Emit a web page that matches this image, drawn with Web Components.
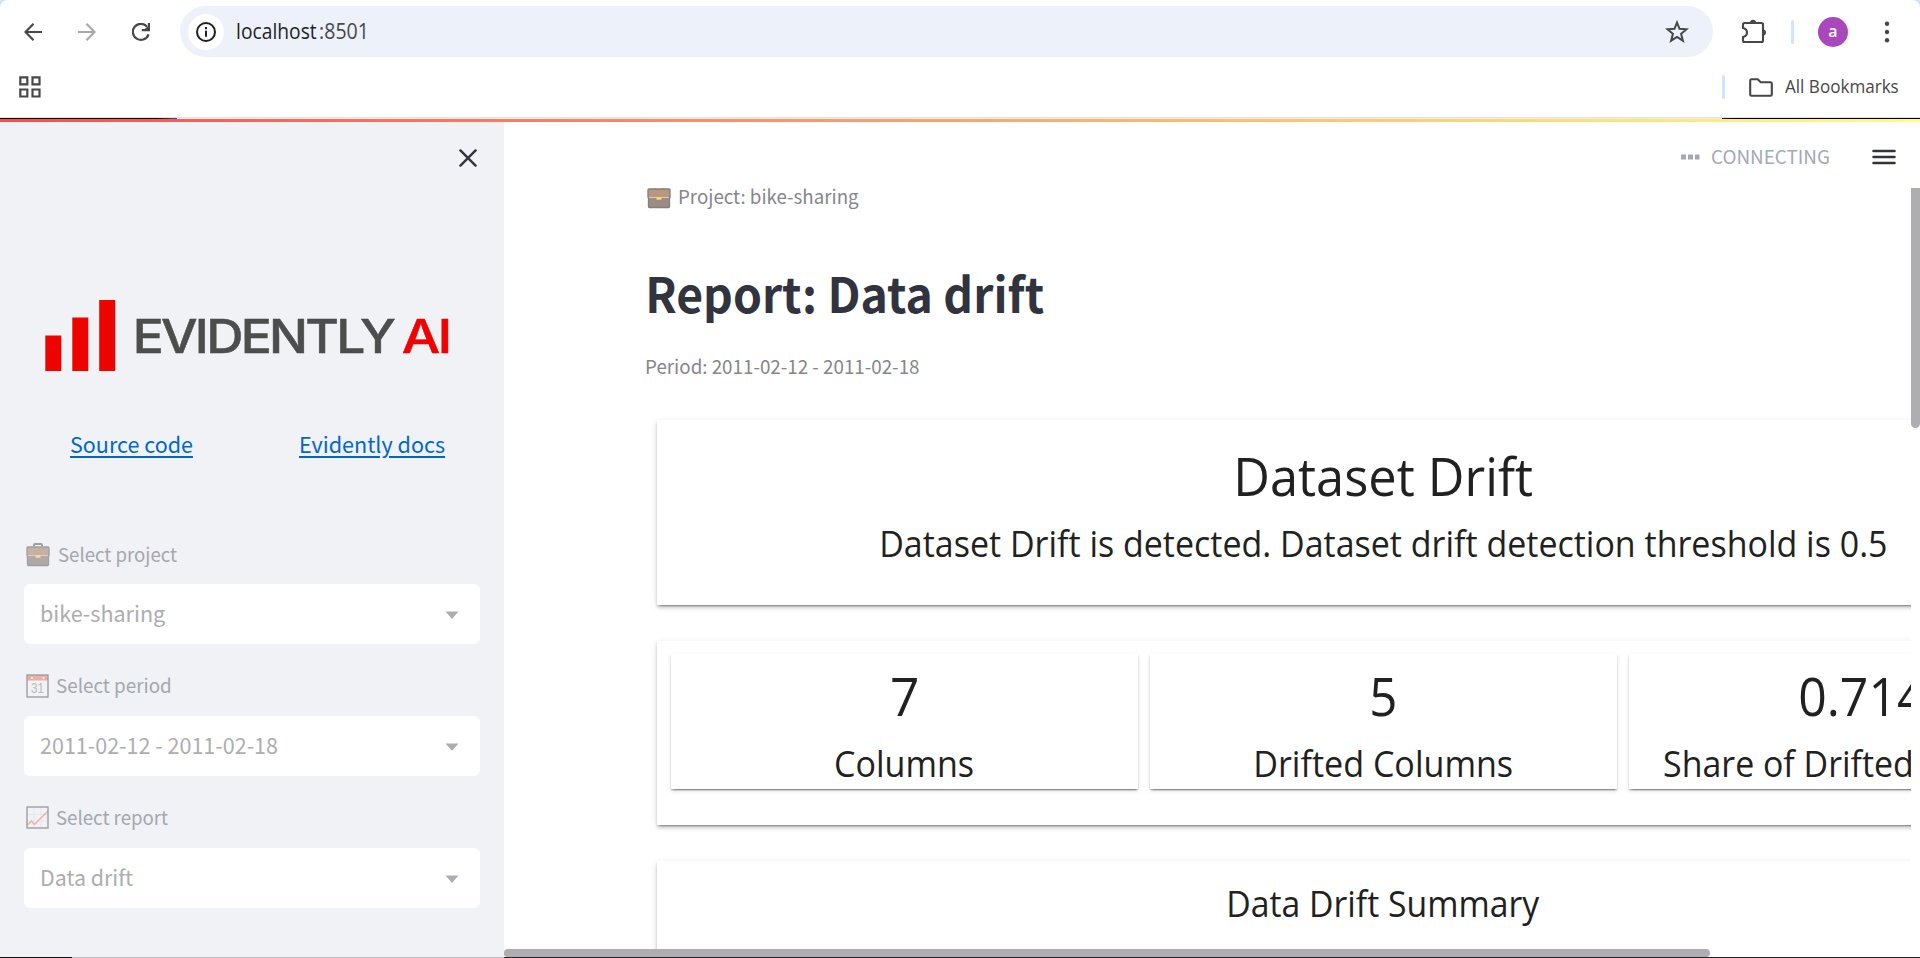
<!DOCTYPE html>
<html lang="en">
<head>
<meta charset="utf-8">
<title>Evidently AI</title>
<style>
html,body{margin:0;height:100%;overflow:hidden;background:#fff}
body{font-family:"Open Sans","Noto Sans",sans-serif;display:flex;flex-direction:column;width:1920px;height:958px}
</style>
</head>
<body>
<browser-bar></browser-bar>
<report-app></report-app>
<script>
const SRC = '"Noto Sans CJK SC","Noto Sans",sans-serif';
function define(name, html, setup) {
  customElements.define(name, class extends HTMLElement {
    constructor() {
      super();
      this.attachShadow({mode: 'open'}).innerHTML = html;
    }
    connectedCallback() { if (setup) setup.call(this, this.shadowRoot); }
  });
}
const pen = document.createElement('canvas').getContext('2d');

/* One line of text whose ink is set to a given width in pixels. */
define('fit-text', `<style>
  :host{display:block;white-space:nowrap;flex:none}
  span{display:inline-block;transform-origin:0 50%;white-space:nowrap}
  :host([link]) span{text-decoration:underline;text-decoration-thickness:2px;text-underline-offset:3px}
</style><span><slot></slot></span>`, function (root) {
  const cs = getComputedStyle(this);
  pen.font = cs.fontWeight + ' ' + cs.fontSize + ' ' + cs.fontFamily;
  pen.letterSpacing = cs.letterSpacing === 'normal' ? '0px' : cs.letterSpacing;
  const m = pen.measureText(this.textContent);
  const ink = m.actualBoundingBoxLeft + m.actualBoundingBoxRight;
  const w = +this.getAttribute('w');
  const s = w / ink;
  this.style.width = w + 'px';
  root.querySelector('span').style.transform = `translateX(${m.actualBoundingBoxLeft * s}px) scaleX(${s})`;
});

define('brief-case', `<style>:host{display:block;flex:none;width:24px;height:24px}svg{display:block}</style>
<svg width="24" height="24" viewBox="0 0 24 24">
<path d="M8 3.500V2q0-1 1-1h6q1 0 1 1v1.500" fill="none" stroke="#3b3b40" stroke-width="2"/>
<path d="M1.500 13h21v8.500q0 1-1 1h-19q-1 0-1-1z" fill="#694f47"/>
<path d="M1 5q0-1 1-1h20q1 0 1 1v7.500H1z" fill="#946137"/>
<path d="M2 4h20q1 0 1 1v7.500l-.5.500v8.500q0 1-1 1h-19q-1 0-1-1V13L1 12.500V5q0-1 1-1z" fill="none" stroke="#3b3b40" stroke-width="1.300"/>
<rect x="9.500" y="12.500" width="5" height="2.200" fill="#ffc524"/></svg>`);

define('calendar-icon', `<style>:host{display:block;flex:none;width:23px;height:24px}svg{display:block}</style>
<svg width="23" height="24" viewBox="0 0 23 24"><rect x="1" y="1" width="21" height="22" fill="#f2f2f2"/>
<rect x="1" y="1" width="21" height="5.500" fill="#f25c43"/><circle cx="6" cy="4" r="1" fill="#fff"/><circle cx="17.500" cy="4" r="1" fill="#fff"/>
<rect x="1" y="1" width="21" height="22" fill="none" stroke="#3b3b40" stroke-width="1.400"/>
<text x="11.500" y="19.300" text-anchor="middle" font-family="Liberation Sans,sans-serif" font-size="14" textLength="13" lengthAdjust="spacingAndGlyphs" fill="#77777b">31</text></svg>`);

define('chart-icon', `<style>:host{display:block;flex:none;width:23px;height:23px}svg{display:block}</style>
<svg width="23" height="23" viewBox="0 0 23 23"><rect x="1" y="1" width="21" height="21" fill="#f2f3f4"/>
<path d="M8 1v21M15 1v21M1 8.500h21M1 15h21" stroke="#dcdcde" stroke-width="1"/>
<path d="M1.500 19l4-4 3 3.500L22 5" fill="none" stroke="#f25c43" stroke-width="1.500"/>
<rect x="1" y="1" width="21" height="21" fill="none" stroke="#3b3b40" stroke-width="1.400"/></svg>`);

define('browser-bar', `<style>
:host{display:block;flex:none;height:122px;background:#d3e3fd;color:#474747}
.bar{background:#fff;border-radius:8px 8px 0 0;height:117px}
.nav{display:flex;align-items:center;padding:6px 0 0 24px;height:51px}
.nav svg{display:block;flex:none}
.pill{display:flex;align-items:center;box-sizing:border-box;width:1533px;height:51px;border-radius:26px;background:#ecf1fa;margin-left:30px;padding:0 24px 0 8px}
.info{width:36px;height:36px;border-radius:50%;background:#fff;display:grid;place-items:center;margin-right:13px}
.pill fit-text{font-size:21.500px;line-height:50px;margin-top:-1px}
.host{color:#1f1f1f;margin-right:3px}
.star{margin-left:auto}
.sep{width:3px;height:24px;border-radius:2px;background:#d3e3fd}
.avatar{width:30px;height:30px;border-radius:50%;background:#aa47bc;color:#fff;text-align:center;font:600 16px/29px "Open Sans",sans-serif}
.marks{display:flex;align-items:center;height:60px;padding:0 22px 0 19px}
.marks .sep{margin-left:auto}
.marks fit-text{font-size:18.500px;line-height:58px;margin:-2px 0 0 12px}
.edge{height:1px;background:#dfe1e5}
.under{height:1px;background:linear-gradient(90deg,#000 0 156px,#444 171px,#0b57d0 171px 177px,#e8f0f0 177px 1722px,#222 1722px,#000 1736px)}
.deco{height:3px;background:linear-gradient(90deg,#ff4b4b,#fffd80)}
</style>
<div class="bar">
<div class="nav">
<svg width="18" height="18" viewBox="0 0 18 18" fill="none" stroke="#474747" stroke-width="2.100"><path d="M9.500.8L1.500 9l8 8.200M1.500 9H18"/></svg>
<svg style="margin-left:36px" width="18" height="18" viewBox="0 0 18 18" fill="none" stroke="#a9a9a9" stroke-width="2.100"><path d="M8.500.8l8 8.200-8 8.200M16.500 9H0"/></svg>
<svg style="margin-left:36px" width="18" height="18" viewBox="0 0 18 18" fill="none" stroke="#474747" stroke-width="2.200"><path d="M16.500 11.300A8 8 0 1 1 15 3.700"/><path d="M17 0v7.200h-7.200"/><path d="M12 6.500l4.500-3.500v4z" fill="#474747" stroke="none"/></svg>
<div class="pill"><div class="info"><svg width="20" height="20" viewBox="0 0 20 20"><circle cx="10" cy="10" r="9" fill="none" stroke="#1f1f1f" stroke-width="2"/><path d="M10 8.800v6M10 5v2.200" stroke="#1f1f1f" stroke-width="2"/></svg></div>
<fit-text class="host" w="80">localhost</fit-text><fit-text w="45">:8501</fit-text>
<svg class="star" width="24" height="24" viewBox="0 0 24 24"><path d="M12 2.500l2.500 6.300 7 .5-5.400 4.500 1.800 6.900L12 17l-5.900 3.700 1.800-6.900L2.500 9.300l7-.5z" fill="none" stroke="#474747" stroke-width="2"/></svg></div>
<svg style="margin-left:28px" width="26" height="25" viewBox="0 0 26 25"><path d="M3.500 4h17q1.500 0 1.500 1.500v16q0 1.500-1.500 1.500h-17Q2 23 2 21.500V18q4-1 4-4.500T2 9V5.500Q2 4 3.500 4z" fill="none" stroke="#474747" stroke-width="2.100"/><path d="M9 4a3 3.200 0 0 1 6 0zM22 10.500a3 3 0 0 1 0 6z" fill="#474747"/></svg>
<div class="sep" style="margin-left:24px"></div>
<div class="avatar" style="margin-left:24px">a</div>
<svg style="margin-left:36px" width="6" height="22" viewBox="0 0 6 22" fill="#474747"><circle cx="3" cy="2.800" r="2.200"/><circle cx="3" cy="11" r="2.200"/><circle cx="3" cy="19.200" r="2.200"/></svg>
</div>
<div class="marks">
<svg width="22" height="22" viewBox="0 0 22 22" fill="none" stroke="#474747" stroke-width="2.200"><path d="M1.300 1.300h7v7h-7zM13.500 1.300h7v7h-7zM1.300 13.500h7v7h-7zM13.500 13.500h7v7h-7z"/></svg>
<div class="sep"></div>
<svg style="margin-left:24px" width="24" height="19" viewBox="0 0 24 19"><path d="M2.500 1.200h6.200l3 3h9.800q1.300 0 1.300 1.300v11q0 1.300-1.300 1.300h-19q-1.300 0-1.300-1.300v-14q0-1.300 1.300-1.300z" fill="none" stroke="#474747" stroke-width="2.100"/></svg>
<fit-text w="113">All Bookmarks</fit-text>
</div>
</div>
<div class="edge"></div><div class="under"></div><div class="deco"></div>`);

define('select-field', `<style>
:host{display:block;font-family:${SRC}}
.label{display:flex;height:30px;padding-left:2px;color:#a5a7af;margin-bottom:var(--gap,16px)}
.label fit-text{font-size:18.900px;line-height:30px;margin-left:var(--lead,6.500px)}
::slotted([slot=icon]){opacity:.45;margin-top:4px}
.box{display:flex;justify-content:space-between;align-items:center;box-sizing:border-box;height:60px;padding:0 21px 0 var(--pad,17px);background:#fff;border-radius:6px}
.box fit-text{font-size:21.600px;line-height:57px;color:#adadb1;align-self:flex-start}
svg{display:block;margin-top:1px}
</style><div class="label"><slot name="icon"></slot></div><div class="box"><svg width="14" height="8" viewBox="0 0 14 8"><path d="M.5.500h13L7.600 7.200q-.6.600-1.200 0z" fill="#adadb1"/></svg></div>`,
function (root) {
  const add = (box, text, w, first) => {
    const t = document.createElement('fit-text');
    t.textContent = text;
    t.setAttribute('w', w);
    first ? box.prepend(t) : box.append(t);
  };
  add(root.querySelector('.label'), this.getAttribute('label'), this.getAttribute('lw'));
  add(root.querySelector('.box'), this.getAttribute('value'), this.getAttribute('vw'), true);
});

define('side-bar', `<style>
:host{display:flex;flex-direction:column;box-sizing:border-box;width:504px;flex:none;background:#f0f2f6;font-family:${SRC}}
.close{display:flex;justify-content:flex-end;align-items:center;height:72px;padding-right:27px;flex:none}
.logo{display:flex;height:71px;margin-top:106px;padding-left:45px;flex:none;font:500 47px/40px Inter,sans-serif;letter-spacing:-2.500px}
.logo svg{margin-right:20px}
.logo fit-text{margin-top:16px;-webkit-text-stroke:.5px currentColor}
.links{display:flex;gap:107px;padding-left:71px;margin-top:53px;flex:none;font-size:21.600px;line-height:40px;color:#0068c9}
.fields{display:flex;flex-direction:column;gap:26px;padding:75px 24px 0;flex:1}
.foot{height:1px;background:linear-gradient(90deg,#111 72px,#bdbdbf 72px)}
</style>
<div class="close"><svg width="18" height="18" viewBox="0 0 18 18"><path d="M1.400 1.400l15.200 15.200M16.600 1.400L1.400 16.600" stroke="#31333f" stroke-width="2.400" stroke-linecap="round"/></svg></div>
<div class="logo"><svg width="71" height="71" viewBox="0 0 71 71" fill="#ed0400"><path d="M.3 35.500h16V71H.3zM27.300 17.500h16V71h-16zM54.200 0h16v71h-16z"/></svg>
<fit-text w="259" style="color:#4d4d4d">EVIDENTLY</fit-text><fit-text w="46" style="color:#ed0400;margin-left:8px">AI</fit-text></div>
<div class="links"><fit-text link w="122">Source code</fit-text><fit-text link w="144" style="margin-left:1px">Evidently docs</fit-text></div>
<div class="fields">
<select-field label="Select project" lw="119" value="bike-sharing" vw="124" style="--gap:15px;--lead:7.500px"><brief-case slot="icon"></brief-case></select-field>
<select-field label="Select period" lw="114" value="2011-02-12 - 2011-02-18" vw="237" style="--pad:16px"><calendar-icon slot="icon"></calendar-icon></select-field>
<select-field label="Select report" lw="112" value="Data drift" vw="91" style="--pad:18px"><chart-icon slot="icon"></chart-icon></select-field>
</div><div class="foot"></div>`);

define('paper-card', `<style>
:host{display:flex;flex-direction:column;align-items:center;box-sizing:border-box;background:#fff;color:#212121;
box-shadow:0 4.500px 1.500px -3px rgba(0,0,0,.2),0 3px 3px 0 rgba(0,0,0,.14),0 1.500px 7.500px 0 rgba(0,0,0,.12),0 1px 1px rgba(0,0,0,.1)}
::slotted([big]){font-size:53.500px;line-height:70px}
::slotted([mid]){font-size:36px;line-height:46px;margin-top:10px}
</style><slot></slot>`);

define('report-app', `<style>
:host{display:flex;flex:1;min-height:0}
main{flex:1;min-width:0;display:flex;flex-direction:column}
header{display:flex;justify-content:flex-end;align-items:center;box-sizing:border-box;height:66px;padding:2px 24px 0 0;flex:none;font:18.900px/64px ${SRC};color:#a3a8b8}
.view{flex:1;min-height:0;display:flex}
.page{flex:1;min-width:0;overflow:hidden;box-sizing:border-box;padding-left:142px;font-family:${SRC};color:#85868c}
.crumb{display:flex;margin:-7px 0 0 1px;height:30px;font-size:18.900px;line-height:30px}
.crumb brief-case{opacity:.65;margin:4px 8px 0 0}
.title{font-weight:700;font-size:48px;line-height:60px;margin:51px 0 0 3px;color:#31333f}
.period{font-size:18.900px;line-height:30px;margin-top:29px}
.cards{display:flex;flex-direction:column;gap:36px;width:1453px;margin:39px 0 0 11px;font-family:"Open Sans","Noto Sans",sans-serif}
.grid{display:grid;grid-template-columns:repeat(3,467px);gap:12px}
.grid paper-card{height:135px;padding-top:7px;box-shadow:0 3px 1.500px -1.500px rgba(0,0,0,.2),0 1.500px 1.500px rgba(0,0,0,.14),0 1.500px 4.500px rgba(0,0,0,.12),0 1px 1px rgba(0,0,0,.1)}
.vbar{width:9px;height:240px;background:#adadb2;border-radius:0 0 5px 5px}
.hbar{width:1206px;height:8px;background:#adadb2;border-radius:5px 5px 5px 4px;flex:none}
.foot{height:1px;background:#2a2324;flex:none}
</style>
<side-bar></side-bar>
<main>
<header><svg width="19" height="6" viewBox="0 0 19 6" fill="#a3a8b8" style="margin:2px 12px 0 0"><path d="M0 .5h5v5H0zM7 .5h5v5H7zM14 .5h4.500v5H14z"/></svg>
<fit-text w="117">CONNECTING</fit-text>
<svg width="24" height="16" viewBox="0 0 24 16" style="margin:2px 0 0 43px"><path d="M1.500 2h21M1.500 8h21M1.500 14h21" stroke="#31333f" stroke-width="2.500" stroke-linecap="round"/></svg></header>
<div class="view"><div class="page">
<div class="crumb"><brief-case></brief-case><fit-text w="180">Project: bike-sharing</fit-text></div>
<fit-text class="title" w="395">Report: Data drift</fit-text>
<fit-text class="period" w="273">Period: 2011-02-12 - 2011-02-18</fit-text>
<div class="cards">
<paper-card style="height:185px;padding-top:21px"><fit-text big w="294" style="margin-left:3px">Dataset Drift</fit-text><fit-text mid w="1004">Dataset Drift is detected. Dataset drift detection threshold is 0.5</fit-text></paper-card>
<paper-card style="height:184px;padding-top:13px"><div class="grid">
<paper-card><fit-text big w="25">7</fit-text><fit-text mid w="137">Columns</fit-text></paper-card>
<paper-card><fit-text big w="23">5</fit-text><fit-text mid w="256">Drifted Columns</fit-text></paper-card>
<paper-card><fit-text big w="125">0.714</fit-text><fit-text mid w="397">Share of Drifted Columns</fit-text></paper-card>
</div></paper-card>
<paper-card style="height:300px;padding-top:10px"><fit-text mid w="311" style="margin-left:2px">Data Drift Summary</fit-text></paper-card>
</div></div>
<div class="vbar"></div></div>
<div class="hbar"></div><div class="foot"></div>
</main>`);
</script>
</body>
</html>
